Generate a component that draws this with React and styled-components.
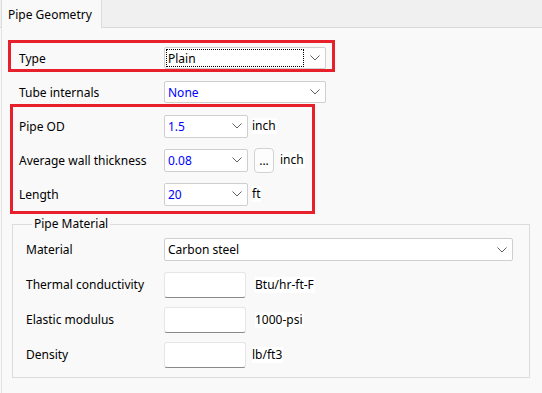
import React from "react";
import styled, { createGlobalStyle } from "styled-components";

const GlobalStyle = createGlobalStyle`
  html, body {
    margin: 0;
    background: #f9f9f9;
  }
  body {
    font-family: "Noto Sans", "Open Sans", sans-serif;
    font-size: 12px;
    color: #000;
  }
  * {
    box-sizing: border-box;
  }
`;

const Window = styled.div`
  width: 542px;
  height: 393px;
  overflow: hidden;
  display: flex;
  flex-direction: column;
  background: #f9f9f9;
`;

const TabStrip = styled.div`
  height: 28px;
  flex: none;
  display: flex;
  background: #f0f0f0;
  border-bottom: 1px solid #dadada;
  padding-left: 1px;
`;

const Tab = styled.div`
  width: 101px;
  height: 28px;
  margin-bottom: -1px;
  padding-left: 6px;
  display: flex;
  align-items: center;
  background: #f9f9f9;
  border-left: 1px solid #dcdcdc;
  border-right: 1px solid #dcdcdc;
  white-space: nowrap;
`;

const Panel = styled.div`
  flex: 1;
  margin-left: 1px;
  border-left: 1px solid #e2e2e2;
  padding-top: 12px;
  display: flex;
  flex-direction: column;
  align-items: flex-start;
`;

const Highlight = styled.div`
  margin-left: ${({ $left }) => $left}px;
  margin-top: ${({ $top }) => $top || 0}px;
  width: ${({ $width }) => $width}px;
  border: 3px solid #e8202c;
  padding: ${({ $pad }) => $pad};
`;

const Row = styled.div`
  display: flex;
  align-items: center;
  height: ${({ $h }) => $h}px;
  margin-top: ${({ $top }) => $top || 0}px;
  padding-left: ${({ $indent }) => $indent || 0}px;
`;

const Label = styled.div`
  width: ${({ $w }) => $w}px;
  flex: none;
  white-space: nowrap;
`;

const Select = styled.div`
  width: ${({ $w }) => $w}px;
  height: ${({ $h }) => $h || 23}px;
  flex: none;
  display: flex;
  align-items: center;
  padding: 0 5px 0 1px;
  background: #fff;
  border: 1px solid #cfcfcf;
  border-radius: 2px;
`;

const Value = styled.div`
  height: 18px;
  display: flex;
  align-items: center;
  padding-left: 1px;
  border: 1px dotted ${({ $focus }) => ($focus ? "#000" : "transparent")};
  color: ${({ $blue }) => ($blue ? "#0000ff" : "#000")};
  ${({ $focus }) => ($focus ? "width: 138px; margin-right: auto;" : "flex: 1;")}
  white-space: nowrap;
`;

const Chevron = () => (
  <svg width="10" height="6" viewBox="0 0 10 6">
    <polyline
      points="0.5,0.5 5,5 9.5,0.5"
      fill="none"
      stroke="#5f5f5f"
      strokeWidth="1"
    />
  </svg>
);

const Dropdown = ({ value, blue, focus, w, h }) => (
  <Select $w={w} $h={h}>
    <Value $blue={blue} $focus={focus}>
      {value}
    </Value>
    <Chevron />
  </Select>
);

const Unit = styled.span`
  margin-left: ${({ $gap }) => $gap}px;
  background: #fff;
  line-height: 16px;
  padding-right: 1px;
  white-space: nowrap;
`;

const EllipsisButton = styled.div`
  width: 20px;
  height: 25px;
  margin-left: 6px;
  display: flex;
  align-items: flex-end;
  justify-content: center;
  padding-bottom: 5px;
  background: #fdfdfd;
  border: 1px solid #d2d2d2;
  border-radius: 4px;
  line-height: 12px;
`;

const Group = styled.fieldset`
  margin: 2px 0 0 10px;
  width: 518px;
  border: 1px solid #dcdcdc;
  padding: 0 16px 5px 13px;
`;

const Legend = styled.legend`
  margin-left: 6px;
  padding: 0 2px;
  line-height: 16px;
`;

const TextBox = styled.div`
  width: 82px;
  height: 26px;
  flex: none;
  background: #fff;
  border: 1px solid #e6e6e6;
  border-bottom-color: #8a8a8a;
  border-radius: 3px;
`;

export default function App() {
  return (
    <Window>
      <GlobalStyle />
      <TabStrip>
        <Tab>Pipe Geometry</Tab>
      </TabStrip>
      <Panel>
        <Highlight $left={6} $width={327} $pad="4px 0 0 8px">
          <Row $h={22}>
            <Label $w={145}>Type</Label>
            <Dropdown value="Plain" focus w={162} h={22} />
          </Row>
        </Highlight>

        <Row $h={22} $top={9} $indent={17}>
          <Label $w={145}>Tube internals</Label>
          <Dropdown value="None" blue w={162} h={22} />
        </Row>

        <Highlight $left={8} $top={1} $width={305} $pad="2px 0 0 6px">
          <Row $h={34}>
            <Label $w={145}>Pipe OD</Label>
            <Dropdown value="1.5" blue w={84} />
            <Unit $gap={4}>inch</Unit>
          </Row>
          <Row $h={34}>
            <Label $w={145}>Average wall thickness</Label>
            <Dropdown value="0.08" blue w={84} />
            <EllipsisButton>...</EllipsisButton>
            <Unit $gap={6}>inch</Unit>
          </Row>
          <Row $h={34}>
            <Label $w={145}>Length</Label>
            <Dropdown value="20" blue w={84} />
            <Unit $gap={4}>ft</Unit>
          </Row>
        </Highlight>

        <Group>
          <Legend>Pipe Material</Legend>
          <Row $h={35}>
            <Label $w={138}>Material</Label>
            <Dropdown value="Carbon steel" w={349} />
          </Row>
          <Row $h={35}>
            <Label $w={138}>Thermal conductivity</Label>
            <TextBox />
            <Unit $gap={9}>Btu/hr-ft-F</Unit>
          </Row>
          <Row $h={35}>
            <Label $w={138}>Elastic modulus</Label>
            <TextBox />
            <Unit $gap={9}>1000-psi</Unit>
          </Row>
          <Row $h={35}>
            <Label $w={138}>Density</Label>
            <TextBox />
            <Unit $gap={6}>lb/ft3</Unit>
          </Row>
        </Group>
      </Panel>
    </Window>
  );
}
